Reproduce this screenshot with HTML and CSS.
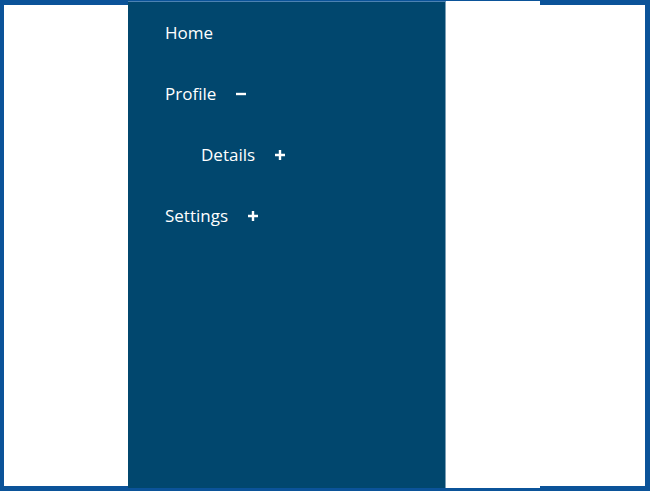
FILE: index.html
```html
<!DOCTYPE html>
<html>
<head>
<meta charset="utf-8">
<link rel="stylesheet" href="styles.css">
</head>
<body>
<div class="frame"></div>
<div class="app">
  <nav class="sidebar">
    <ul class="menu">
      <li class="item"><span class="label">Home</span></li>
      <li class="item"><span class="label">Profile</span>
        <svg class="sign" width="10" height="10" viewBox="0 0 10 10"><path d="M0 5H10" stroke="#fff" stroke-width="2.4"/></svg>
      </li>
      <li class="item sub"><span class="label">Details</span>
        <svg class="sign" width="10" height="10" viewBox="0 0 10 10"><path d="M0 5H10M5 0V10" stroke="#fff" stroke-width="2.4"/></svg>
      </li>
      <li class="item"><span class="label">Settings</span>
        <svg class="sign" width="10" height="10" viewBox="0 0 10 10"><path d="M0 5H10M5 0V10" stroke="#fff" stroke-width="2.4"/></svg>
      </li>
    </ul>
  </nav>
  <div class="content"></div>
</div>
</body>
</html>
```
FILE: styles.css
```css
html, body {
  margin: 0;
  padding: 0;
  background: #ffffff;
}
body {
  width: 650px;
  height: 491px;
  position: relative;
  overflow: hidden;
  font-family: "Open Sans", "Noto Sans", sans-serif;
}
.frame {
  box-sizing: border-box;
  width: 650px;
  height: 491px;
  border-style: solid;
  border-color: #0b5399;
  border-width: 5px 5px 5px 4px;
  background: #ffffff;
}
.app {
  position: absolute;
  left: 128px;
  top: 1px;
  width: 412px;
  height: 487px;
  display: flex;
}
.sidebar {
  box-sizing: border-box;
  width: 318px;
  height: 100%;
  background: #01476e;
  border-top: 1px solid #4c82b2;
  border-right: 1px solid #7d9fb6;
}
.content {
  flex: 1;
  background: #ffffff;
}
.menu {
  list-style: none;
  margin: 0;
  padding: 0 0 0 37px;
}
.item {
  height: 61px;
  display: flex;
  align-items: center;
  gap: 20px;
  color: #ffffff;
  font-size: 17px;
}
.item.sub {
  padding-left: 36px;
}
.label {
  line-height: 20px;
}
.sign {
  display: block;
  margin-top: 1px;
}
```
